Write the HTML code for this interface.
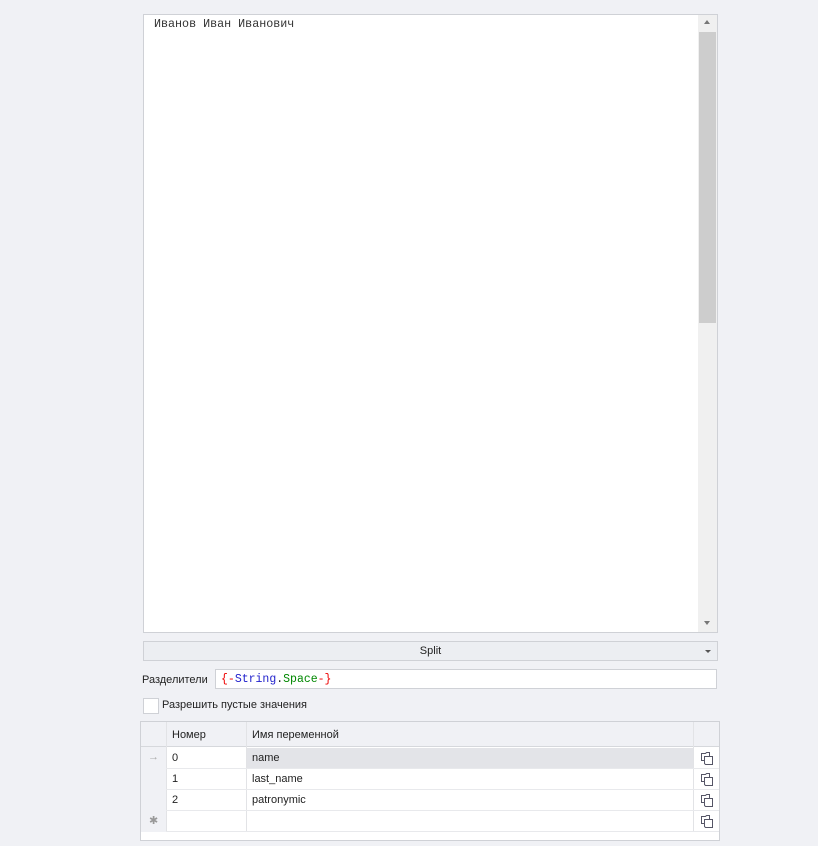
<!DOCTYPE html><html><head><meta charset="utf-8"><style>
body{margin:0;width:818px;height:846px;background:#f0f1f5;font-family:"Liberation Sans",sans-serif;font-size:11px;color:#222;position:relative;overflow:hidden}
.a{position:absolute;box-sizing:border-box}
</style></head><body>
<div class="a" style="left:143px;top:14px;width:575px;height:619px;background:#fff;border:1px solid #cfd1d6"></div>
<div class="a" style="left:154px;top:17px;font-family:'Liberation Mono',monospace;font-size:11.7px;color:#333">Иванов Иван Иванович</div>
<div class="a" style="left:698px;top:15px;width:19px;height:617px;background:#f0f0f0"></div>
<div class="a" style="left:699px;top:32px;width:17px;height:291px;background:#cdcdcd"></div>
<div class="a" style="left:704px;top:20px;width:0;height:0;border:3px solid transparent;border-bottom:4px solid #777;border-top:0"></div>
<div class="a" style="left:704px;top:621px;width:0;height:0;border:3px solid transparent;border-top:4px solid #777;border-bottom:0"></div>
<div class="a" style="left:143px;top:641px;width:575px;height:20px;background:#eceef2;border:1px solid #cfd1d6;text-align:center;line-height:18px">Split</div>
<div class="a" style="left:705px;top:650px;border:3px solid transparent;border-top:3px solid #555;border-bottom:0"></div>
<div class="a" style="left:142px;top:674px">Разделители</div>
<div class="a" style="left:215px;top:669px;width:502px;height:20px;background:#fff;border:1px solid #cfd1d6;padding:4px 5px;font-family:'Liberation Mono',monospace;font-size:11.5px;line-height:11px"><span style="color:#e00">{-</span><span style="color:#22c">String</span>.<span style="color:#080">Space</span><span style="color:#e00">-}</span></div>
<div class="a" style="left:143px;top:698px;width:16px;height:16px;background:#fff;border:1px solid #cfd1d6"></div>
<div class="a" style="left:162px;top:699px">Разрешить пустые значения</div>
<div class="a" style="left:140px;top:721px;width:580px;height:120px;background:#fff;border:1px solid #cfd1d6"></div>
<div class="a" style="left:141px;top:722px;width:578px;height:25px;background:#f0f1f5;border-bottom:1px solid #d6d8dc"></div>
<div class="a" style="left:141px;top:747px;width:25px;height:85px;background:#f0f1f5"></div>
<div class="a" style="left:246px;top:748px;width:447px;height:20px;background:#e3e4e8"></div>
<div class="a" style="left:166px;top:722px;width:1px;height:110px;background:#e2e3e6"></div>
<div class="a" style="left:246px;top:722px;width:1px;height:110px;background:#e2e3e6"></div>
<div class="a" style="left:693px;top:722px;width:1px;height:110px;background:#e2e3e6"></div>
<div class="a" style="left:166px;top:768px;width:553px;height:1px;background:#e8e9ec"></div>
<div class="a" style="left:166px;top:789px;width:553px;height:1px;background:#e8e9ec"></div>
<div class="a" style="left:166px;top:810px;width:553px;height:1px;background:#e8e9ec"></div>
<div class="a" style="left:166px;top:831px;width:553px;height:1px;background:#e8e9ec"></div>
<div class="a" style="left:172px;top:729px">Номер</div>
<div class="a" style="left:252px;top:729px">Имя переменной</div>
<div class="a" style="left:148px;top:751px;color:#aaa">→</div>
<div class="a" style="left:149px;top:814px;color:#999">✱</div>
<div class="a" style="left:172px;top:752px">0</div><div class="a" style="left:252px;top:752px">name</div>
<div class="a" style="left:172px;top:773px">1</div><div class="a" style="left:252px;top:773px">last_name</div>
<div class="a" style="left:172px;top:794px">2</div><div class="a" style="left:252px;top:794px">patronymic</div>
<svg class="a" style="left:700px;top:751px" width="14" height="80"><g fill="#fff" stroke="#556" stroke-width="1">
<g id="c"><path d="M1.5 2.5h4l1-1h3v8h-8z"/><path d="M4.5 5.5h8v8h-7l-1-1z"/></g>
<use href="#c" y="21"/><use href="#c" y="42"/><use href="#c" y="63"/></g></svg>
</body></html>
